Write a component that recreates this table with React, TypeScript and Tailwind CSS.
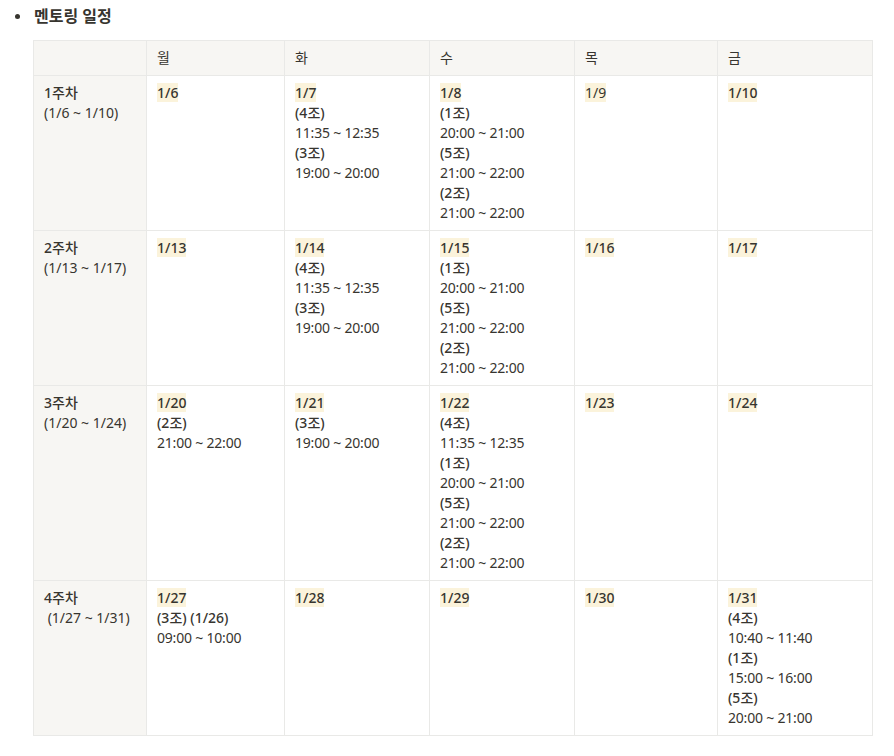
const FONT = { fontFamily: '"Noto Sans", "Noto Sans CJK KR", sans-serif' };

type Slot = { group: string; time: string };
type Day = { date: string; bold?: boolean; slots?: Slot[] };
type Week = { label: string; range: string; days: Day[] };

const weeks: Week[] = [
  {
    label: "1주차",
    range: "(1/6 ~ 1/10)",
    days: [
      { date: "1/6", bold: true },
      {
        date: "1/7",
        bold: true,
        slots: [
          { group: "(4조)", time: "11:35 ~ 12:35" },
          { group: "(3조)", time: "19:00 ~ 20:00" },
        ],
      },
      {
        date: "1/8",
        bold: true,
        slots: [
          { group: "(1조)", time: "20:00 ~ 21:00" },
          { group: "(5조)", time: "21:00 ~ 22:00" },
          { group: "(2조)", time: "21:00 ~ 22:00" },
        ],
      },
      { date: "1/9" },
      { date: "1/10", bold: true },
    ],
  },
  {
    label: "2주차",
    range: "(1/13 ~ 1/17)",
    days: [
      { date: "1/13", bold: true },
      {
        date: "1/14",
        bold: true,
        slots: [
          { group: "(4조)", time: "11:35 ~ 12:35" },
          { group: "(3조)", time: "19:00 ~ 20:00" },
        ],
      },
      {
        date: "1/15",
        bold: true,
        slots: [
          { group: "(1조)", time: "20:00 ~ 21:00" },
          { group: "(5조)", time: "21:00 ~ 22:00" },
          { group: "(2조)", time: "21:00 ~ 22:00" },
        ],
      },
      { date: "1/16", bold: true },
      { date: "1/17", bold: true },
    ],
  },
  {
    label: "3주차",
    range: "(1/20 ~ 1/24)",
    days: [
      { date: "1/20", bold: true, slots: [{ group: "(2조)", time: "21:00 ~ 22:00" }] },
      { date: "1/21", bold: true, slots: [{ group: "(3조)", time: "19:00 ~ 20:00" }] },
      {
        date: "1/22",
        bold: true,
        slots: [
          { group: "(4조)", time: "11:35 ~ 12:35" },
          { group: "(1조)", time: "20:00 ~ 21:00" },
          { group: "(5조)", time: "21:00 ~ 22:00" },
          { group: "(2조)", time: "21:00 ~ 22:00" },
        ],
      },
      { date: "1/23", bold: true },
      { date: "1/24", bold: true },
    ],
  },
  {
    label: "4주차",
    range: "\u00a0(1/27 ~ 1/31)",
    days: [
      { date: "1/27", bold: true, slots: [{ group: "(3조) (1/26)", time: "09:00 ~ 10:00" }] },
      { date: "1/28", bold: true },
      { date: "1/29", bold: true },
      { date: "1/30", bold: true },
      {
        date: "1/31",
        bold: true,
        slots: [
          { group: "(4조)", time: "10:40 ~ 11:40" },
          { group: "(1조)", time: "15:00 ~ 16:00" },
          { group: "(5조)", time: "20:00 ~ 21:00" },
        ],
      },
    ],
  },
];

const dayNames = ["월", "화", "수", "목", "금"];
const colWidths = ["w-[113px]", "w-[138px]", "w-[145px]", "w-[145px]", "w-[143px]", "w-[155px]"];

function DayCell({ day }: { day: Day }) {
  return (
    <td className="border border-[#e9e9e7] align-top px-[10px] pt-[7px] pb-[7px]">
      <span className={`bg-[#fbf3db] ${day.bold ? "font-medium" : ""}`}>{day.date}</span>
      {day.slots?.map((s, i) => (
        <div key={i}>
          <div className="font-medium">{s.group}</div>
          <div className="tracking-[-0.2px]">{s.time}</div>
        </div>
      ))}
    </td>
  );
}

export default function App() {
  return (
    <div className="bg-white min-h-screen text-[#37352f] text-[14px] leading-[20px]" style={FONT}>
      <div className="flex items-center pt-[5px] pl-[15px]">
        <span className="w-[5px] h-[5px] rounded-full bg-[#37352f] mr-[14px]" />
        <span className="font-bold text-[16px] leading-[22px]">멘토링 일정</span>
      </div>
      <div className="pl-[33px] pt-[13px]">
        <table className="border-collapse table-fixed w-[839px]">
          <colgroup>
            {colWidths.map((w, i) => (
              <col key={i} className={w} />
            ))}
          </colgroup>
          <thead>
            <tr className="bg-[#f7f6f3]">
              <th className="border border-[#e9e9e7] font-normal text-left px-[10px] pt-[7px] pb-[7px]" />
              {dayNames.map((d) => (
                <th
                  key={d}
                  className="border border-[#e9e9e7] font-normal text-left px-[10px] pt-[7px] pb-[7px]"
                >
                  {d}
                </th>
              ))}
            </tr>
          </thead>
          <tbody>
            {weeks.map((w) => (
              <tr key={w.label}>
                <td className="border border-[#e9e9e7] bg-[#f7f6f3] align-top px-[10px] pt-[7px] pb-[7px] h-[154px]">
                  <div className="font-medium">{w.label}</div>
                  <div>{w.range}</div>
                </td>
                {w.days.map((d) => (
                  <DayCell key={d.date} day={d} />
                ))}
              </tr>
            ))}
          </tbody>
        </table>
      </div>
    </div>
  );
}
